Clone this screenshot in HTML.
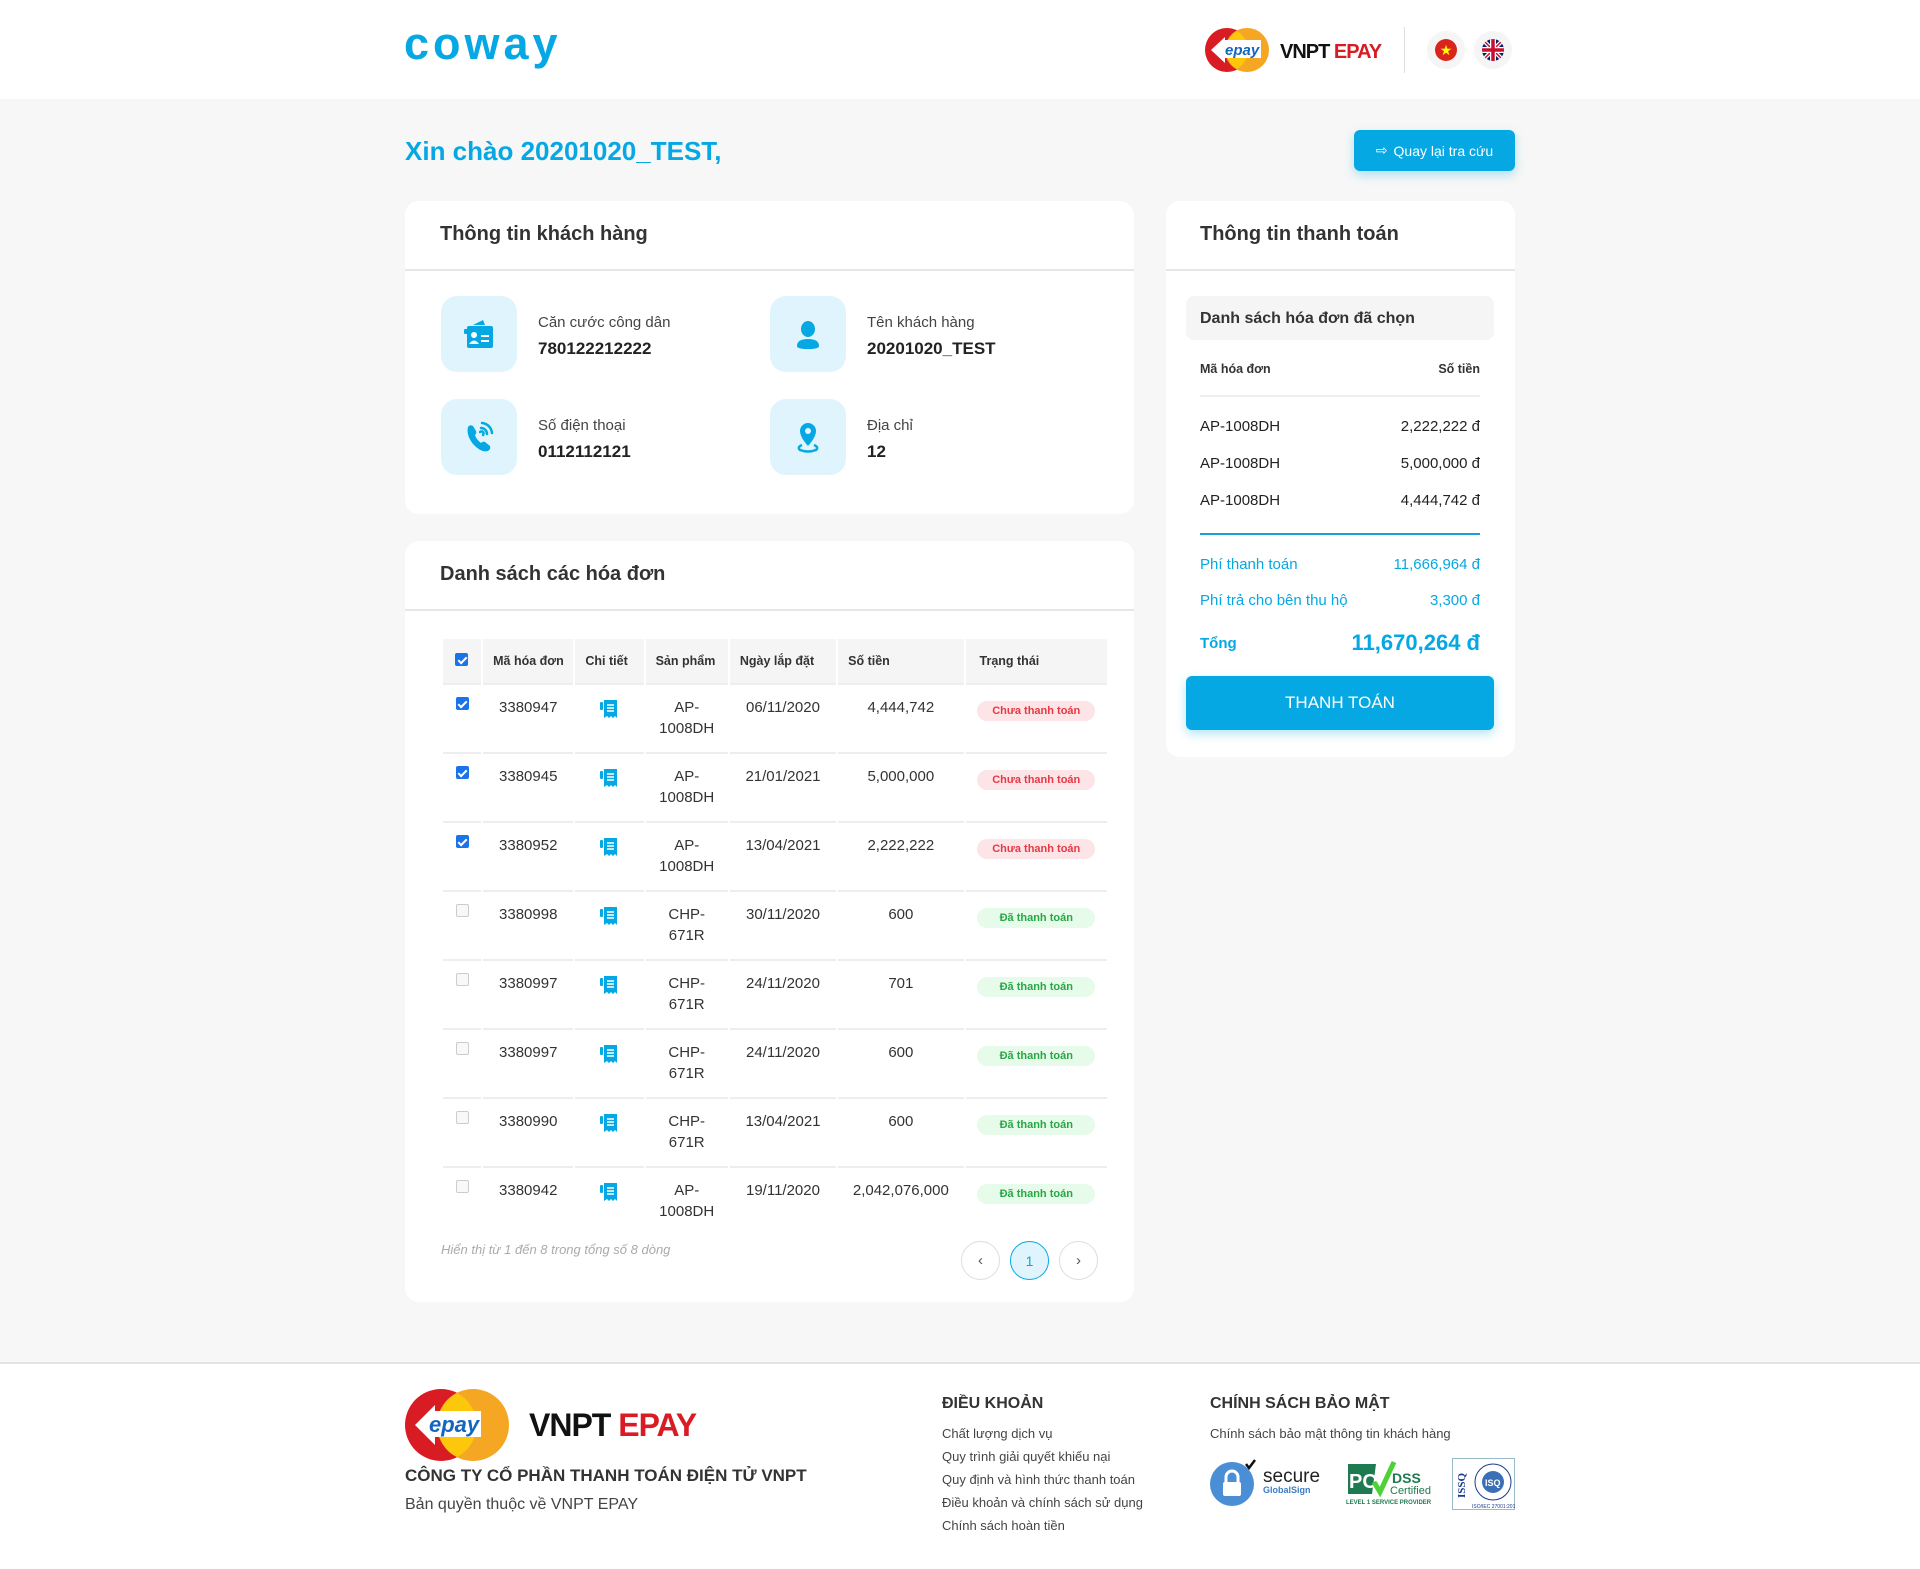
<!DOCTYPE html>
<html><head><meta charset="utf-8"><style>
*{box-sizing:border-box;margin:0;padding:0}
body{width:1920px;height:1569px;background:#f7f7f7;font-family:"Liberation Sans",sans-serif;color:#222;position:relative;overflow:hidden}
.abs{position:absolute}
.hdr{left:0;top:0;width:1920px;height:99px;background:#fff}
.card{background:#fff;border-radius:14px}
.blue{color:#05a8e3}
.ttl{font-size:20px;font-weight:bold;color:#333}
.div{height:2px;background:#e6e6e6}
.ib{width:76px;height:76px;border-radius:16px;background:#dff4fd;display:flex;align-items:center;justify-content:center}
.lbl{font-size:15px;color:#444}
.val{font-size:17px;font-weight:bold;color:#222;margin-top:8px}
table{border-collapse:separate;border-spacing:2px 0;position:absolute;left:441px;top:639px;width:668px;font-size:15px}
th{background:#f5f5f5;height:44px;font-size:12.5px;font-weight:bold;text-align:left;padding-left:10px;color:#333}
td{height:69px;vertical-align:top;padding-top:12px;line-height:21px;text-align:center;border-top:2px solid #eee;color:#333}
.cb{display:inline-block;width:13px;height:13px;border-radius:2px;border:1px solid #ccc;background:#f8f8f8}
.cb.on{background:#1a73e8;border-color:#1a73e8;position:relative}
.cb.on:after{content:"";position:absolute;left:3.5px;top:0.5px;width:3px;height:7px;border:solid #fff;border-width:0 2px 2px 0;transform:rotate(45deg)}
.bd{display:inline-block;width:118px;height:20px;border-radius:10px;font-size:11px;font-weight:bold;line-height:20px;text-align:center}
.red{background:#fde4e6;color:#e53945}
.grn{background:#e6fbe9;color:#28a745}
.pg{width:39px;height:39px;border-radius:50%;border:1px solid #ddd;background:#fff;display:flex;align-items:center;justify-content:center;color:#555;font-size:15px}
.row{display:flex;justify-content:space-between;font-size:15px}
.fl{font-size:13px;color:#444;line-height:23px}
</style></head><body>
<div class="abs hdr"></div>
<div class="abs blue" style="left:404px;top:18px;font-size:45px;font-weight:bold;letter-spacing:4px;font-family:'Liberation Sans',sans-serif">coway</div>
<svg class="abs" style="left:1205px;top:27px" width="180" height="46" viewBox="0 0 180 46">
<circle cx="22" cy="23" r="22" fill="#d91c24"/><circle cx="42" cy="23" r="22" fill="#f5a623"/>
<path d="M32 4 A22 22 0 0 1 32 42 A22 22 0 0 1 32 4Z" fill="#fdc70c"/>
<path d="M6 23 L20 10 L20 36Z" fill="#fff"/><rect x="18" y="13" width="38" height="18" fill="#fff"/>
<text x="20" y="28" font-family="Liberation Sans" font-weight="bold" font-style="italic" font-size="15" fill="#1565c0">epay</text>
<text x="75" y="31" font-family="Liberation Sans" font-weight="bold" font-size="20" fill="#111" letter-spacing="-1">VNPT <tspan fill="#d91c24">EPAY</tspan></text>
</svg>
<div class="abs" style="left:1404px;top:27px;width:1px;height:46px;background:#ddd"></div>
<div class="abs" style="left:1427px;top:31px;width:38px;height:38px;border-radius:50%;background:#f5f5f5"></div>
<div class="abs" style="left:1435px;top:39px;width:22px;height:22px;border-radius:50%;background:#da251d;color:#ff0;font-size:14px;text-align:center;line-height:22px">★</div>
<div class="abs" style="left:1474px;top:31px;width:38px;height:38px;border-radius:50%;background:#f5f5f5"></div>
<svg class="abs" style="left:1482px;top:39px" width="22" height="22" viewBox="0 0 22 22"><clipPath id="c"><circle cx="11" cy="11" r="11"/></clipPath><g clip-path="url(#c)"><rect width="22" height="22" fill="#012169"/><path d="M0 0L22 22M22 0L0 22" stroke="#fff" stroke-width="4"/><path d="M0 0L22 22M22 0L0 22" stroke="#c8102e" stroke-width="1.5"/><path d="M11 0V22M0 11H22" stroke="#fff" stroke-width="6"/><path d="M11 0V22M0 11H22" stroke="#c8102e" stroke-width="3.5"/></g></svg>

<div class="abs blue" style="left:405px;top:136px;font-size:26px;font-weight:bold">Xin chào 20201020_TEST,</div>
<div class="abs" style="left:1354px;top:130px;width:161px;height:41px;border-radius:6px;background:#05a8e3;color:#fff;font-size:14px;display:flex;align-items:center;justify-content:center;box-shadow:0 4px 10px rgba(5,168,227,.3)"><span style="font-size:14px;margin-right:6px">⇨</span>Quay lại tra cứu</div>

<div class="abs card" style="left:405px;top:201px;width:729px;height:313px"></div>
<div class="abs ttl" style="left:440px;top:223px">Thông tin khách hàng</div>
<div class="abs div" style="left:405px;top:269px;width:729px"></div>
<div class="abs ib" style="left:441px;top:296px"><svg width="36" height="36" viewBox="0 0 36 36"><path d="M12 9 L22 4 L24 9Z" fill="#05a8e3"/><rect x="6" y="10" width="26" height="22" rx="2" fill="#05a8e3"/><rect x="3" y="13" width="4" height="5" rx="1" fill="#05a8e3"/><circle cx="13" cy="19" r="3" fill="#fff"/><path d="M8 28 Q13 21 18 28Z" fill="#fff"/><rect x="20" y="19" width="8" height="2" fill="#fff"/><rect x="20" y="24" width="8" height="2" fill="#fff"/></svg></div>
<div class="abs" style="left:538px;top:314px"><div class="lbl">Căn cước công dân</div><div class="val">780122212222</div></div>
<div class="abs ib" style="left:770px;top:296px"><svg width="36" height="36" viewBox="0 0 36 36"><ellipse cx="18" cy="13" rx="7" ry="8" fill="#05a8e3"/><path d="M7 30 Q7 23 18 23 Q29 23 29 30 Q29 33 18 33 Q7 33 7 30Z" fill="#05a8e3"/></svg></div>
<div class="abs" style="left:867px;top:314px"><div class="lbl">Tên khách hàng</div><div class="val">20201020_TEST</div></div>
<div class="abs ib" style="left:441px;top:399px"><svg width="36" height="36" viewBox="0 0 36 36"><path d="M7 8 Q9 5 12 7 L15 12 Q16 14 14 16 Q15 20 20 24 Q22 22 24 23 L29 27 Q30 30 27 32 Q20 34 12 25 Q5 16 7 8Z" fill="#05a8e3"/><path d="M20 9 A6 6 0 0 1 26 15 M21 4 A11 11 0 0 1 31 14 M19 13 A2 2 0 0 1 22 16" stroke="#05a8e3" stroke-width="2.5" fill="none" stroke-linecap="round"/></svg></div>
<div class="abs" style="left:538px;top:417px"><div class="lbl">Số điện thoại</div><div class="val">0112112121</div></div>
<div class="abs ib" style="left:770px;top:399px"><svg width="36" height="36" viewBox="0 0 36 36"><path d="M18 4 A8 8 0 0 1 26 12 Q26 18 18 27 Q10 18 10 12 A8 8 0 0 1 18 4Z" fill="#05a8e3"/><circle cx="18" cy="12" r="3" fill="#dff4fd"/><path d="M12 26 Q7 28 10 31 Q18 34 26 31 Q29 28 24 26" stroke="#05a8e3" stroke-width="2.5" fill="none"/></svg></div>
<div class="abs" style="left:867px;top:417px"><div class="lbl">Địa chỉ</div><div class="val">12</div></div>

<div class="abs card" style="left:405px;top:541px;width:729px;height:761px"></div>
<div class="abs ttl" style="left:440px;top:563px">Danh sách các hóa đơn</div>
<div class="abs div" style="left:405px;top:609px;width:729px"></div>
<table>
<colgroup><col style="width:38px"><col style="width:90px"><col style="width:68px"><col style="width:82px"><col style="width:106px"><col style="width:125px"><col style="width:141px"></colgroup>
<tr><th style="padding-left:12px"><span class="cb on"></span></th><th>Mã hóa đơn</th><th>Chi tiết</th><th>Sản phẩm</th><th>Ngày lắp đặt</th><th>Số tiền</th><th style="padding-left:14px">Trạng thái</th></tr>
</table>
<div id="rows"></div>
<script>
var R=[["on","3380947","AP-<br>1008DH","06/11/2020","4,444,742",0],["on","3380945","AP-<br>1008DH","21/01/2021","5,000,000",0],["on","3380952","AP-<br>1008DH","13/04/2021","2,222,222",0],["","3380998","CHP-<br>671R","30/11/2020","600",1],["","3380997","CHP-<br>671R","24/11/2020","701",1],["","3380997","CHP-<br>671R","24/11/2020","600",1],["","3380990","CHP-<br>671R","13/04/2021","600",1],["","3380942","AP-<br>1008DH","19/11/2020","2,042,076,000",1]];
var ic='<svg width="20" height="22" viewBox="0 0 20 22"><rect x="1" y="4" width="3" height="8" rx="1" fill="#05a8e3"/><path d="M5 2 H18 V20 L16 18 L14 20 L12 18 L10 20 L8 18 L5 20Z" fill="#05a8e3"/><path d="M8 7H15M8 10H15M8 13H15" stroke="#fff" stroke-width="1.5"/></svg>';
var h='<table style="top:683px"><colgroup><col style="width:38px"><col style="width:90px"><col style="width:68px"><col style="width:82px"><col style="width:106px"><col style="width:125px"><col style="width:141px"></colgroup>';
R.forEach(function(r){h+='<tr><td style="padding-top:10px"><span class="cb '+r[0]+'"></span></td><td>'+r[1]+'</td><td style="padding-top:13px">'+ic+'</td><td>'+r[2]+'</td><td>'+r[3]+'</td><td>'+r[4]+'</td><td style="padding-top:14px">'+(r[5]?'<span class="bd grn">Đã thanh toán</span>':'<span class="bd red">Chưa thanh toán</span>')+'</td></tr>';});
document.getElementById('rows').innerHTML=h+'</table>';
</script>
<div class="abs" style="left:441px;top:1242px;font-size:13px;font-style:italic;color:#aaa">Hiển thị từ 1 đến 8 trong tổng số 8 dòng</div>
<div class="abs pg" style="left:961px;top:1241px">&#x2039;</div>
<div class="abs pg" style="left:1010px;top:1241px;background:#dff4fd;border-color:#05a8e3;color:#05a8e3;font-size:14px">1</div>
<div class="abs pg" style="left:1059px;top:1241px">&#x203A;</div>

<div class="abs card" style="left:1166px;top:201px;width:349px;height:556px"></div>
<div class="abs ttl" style="left:1200px;top:223px">Thông tin thanh toán</div>
<div class="abs div" style="left:1166px;top:269px;width:349px"></div>
<div class="abs" style="left:1186px;top:296px;width:308px;height:44px;background:#f5f5f5;border-radius:8px;font-size:16px;font-weight:bold;color:#333;padding:14px 0 0 14px">Danh sách hóa đơn đã chọn</div>
<div class="abs row" style="left:1200px;top:362px;width:280px;font-size:12.5px;font-weight:bold;color:#333"><span>Mã hóa đơn</span><span>Số tiền</span></div>
<div class="abs" style="left:1200px;top:395px;width:280px;height:2px;background:#eee"></div>
<div class="abs row" style="left:1200px;top:418px;width:280px"><span>AP-1008DH</span><span>2,222,222 đ</span></div>
<div class="abs row" style="left:1200px;top:455px;width:280px"><span>AP-1008DH</span><span>5,000,000 đ</span></div>
<div class="abs row" style="left:1200px;top:492px;width:280px"><span>AP-1008DH</span><span>4,444,742 đ</span></div>
<div class="abs" style="left:1200px;top:533px;width:280px;height:2px;background:#1a9fd6"></div>
<div class="abs row blue" style="left:1200px;top:556px;width:280px"><span>Phí thanh toán</span><span>11,666,964 đ</span></div>
<div class="abs row blue" style="left:1200px;top:592px;width:280px"><span>Phí trả cho bên thu hộ</span><span>3,300 đ</span></div>
<div class="abs row blue" style="left:1200px;top:630px;width:280px;align-items:center"><span style="font-weight:bold;font-size:15px">Tổng</span><span style="font-weight:bold;font-size:22px">11,670,264 đ</span></div>
<div class="abs" style="left:1186px;top:676px;width:308px;height:54px;background:#05a8e3;border-radius:6px;color:#fff;font-size:17px;display:flex;align-items:center;justify-content:center;box-shadow:0 4px 10px rgba(5,168,227,.3)">THANH TOÁN</div>

<div class="abs" style="left:0;top:1362px;width:1920px;height:207px;background:#fff;border-top:2px solid #e3e3e3"></div>
<svg class="abs" style="left:405px;top:1388px" width="300" height="74" viewBox="0 0 300 74">
<circle cx="36" cy="37" r="36" fill="#d91c24"/><circle cx="68" cy="37" r="36" fill="#f5a623"/>
<path d="M52 5 A36 36 0 0 1 52 69 A36 36 0 0 1 52 5Z" fill="#fdc70c"/>
<path d="M10 37 L30 17 L30 57Z" fill="#fff"/><rect x="28" y="23" width="48" height="26" fill="#fff"/>
<text x="24" y="44" font-family="Liberation Sans" font-weight="bold" font-style="italic" font-size="22" fill="#1565c0">epay</text>
<text x="124" y="48" font-family="Liberation Sans" font-weight="bold" font-size="32" fill="#111" letter-spacing="-1">VNPT <tspan fill="#d91c24">EPAY</tspan></text>
</svg>
<div class="abs" style="left:405px;top:1466px;font-size:17px;font-weight:bold;color:#333">CÔNG TY CỔ PHẦN THANH TOÁN ĐIỆN TỬ VNPT</div>
<div class="abs" style="left:405px;top:1496px;font-size:16px;color:#444">Bản quyền thuộc về VNPT EPAY</div>
<div class="abs" style="left:942px;top:1395px;font-size:16px;font-weight:bold;color:#333">ĐIỀU KHOẢN</div>
<div class="abs fl" style="left:942px;top:1422px">Chất lượng dịch vụ<br>Quy trình giải quyết khiếu nại<br>Quy định và hình thức thanh toán<br>Điều khoản và chính sách sử dụng<br>Chính sách hoàn tiền</div>
<div class="abs" style="left:1210px;top:1395px;font-size:16px;font-weight:bold;color:#333">CHÍNH SÁCH BẢO MẬT</div>
<div class="abs fl" style="left:1210px;top:1422px">Chính sách bảo mật thông tin khách hàng</div>
<svg class="abs" style="left:1210px;top:1458px" width="120" height="50" viewBox="0 0 120 50"><circle cx="22" cy="26" r="22" fill="#4a8fd6"/><rect x="13" y="24" width="18" height="14" rx="2" fill="#fff"/><path d="M16 24 V19 A6 6 0 0 1 28 19 V24" stroke="#fff" stroke-width="3" fill="none"/><path d="M36 6 L39 10 L45 2" stroke="#111" stroke-width="2.5" fill="none"/><text x="53" y="24" font-family="Liberation Sans" font-size="19" fill="#222">secure</text><text x="53" y="35" font-family="Liberation Sans" font-weight="bold" font-size="9" fill="#3b7cc4">GlobalSign</text></svg>
<svg class="abs" style="left:1346px;top:1458px" width="86" height="50" viewBox="0 0 86 50"><path d="M2 6 H30 L26 36 H2Z" fill="#1e7a4f"/><text x="3" y="30" font-family="Liberation Sans" font-weight="bold" font-size="20" fill="#fff">PCI</text><path d="M28 24 L34 34 L48 4" stroke="#4cd137" stroke-width="5" fill="none"/><text x="46" y="25" font-family="Liberation Sans" font-weight="bold" font-size="14" fill="#1e7a4f">DSS</text><text x="44" y="36" font-family="Liberation Sans" font-size="11" fill="#1e7a4f">Certified</text><text x="0" y="46" font-family="Liberation Sans" font-weight="bold" font-size="6" fill="#1e7a4f">LEVEL 1 SERVICE PROVIDER</text></svg>
<svg class="abs" style="left:1452px;top:1458px" width="63" height="52" viewBox="0 0 63 52"><rect x="0.5" y="0.5" width="62" height="51" fill="#fff" stroke="#9bc" /><text x="13" y="40" transform="rotate(-90 13 40)" font-family="Liberation Serif" font-weight="bold" font-size="11" fill="#1a3c8c">ISSQ</text><circle cx="41" cy="24" r="18" fill="#fff" stroke="#1a3c8c"/><circle cx="41" cy="24" r="11" fill="#3b6fb6"/><text x="33" y="28" font-family="Liberation Sans" font-weight="bold" font-size="9" fill="#fff">ISQ</text><text x="20" y="50" font-family="Liberation Sans" font-size="5" fill="#1a3c8c">ISO/IEC 27001:2013</text></svg>
</body></html>
